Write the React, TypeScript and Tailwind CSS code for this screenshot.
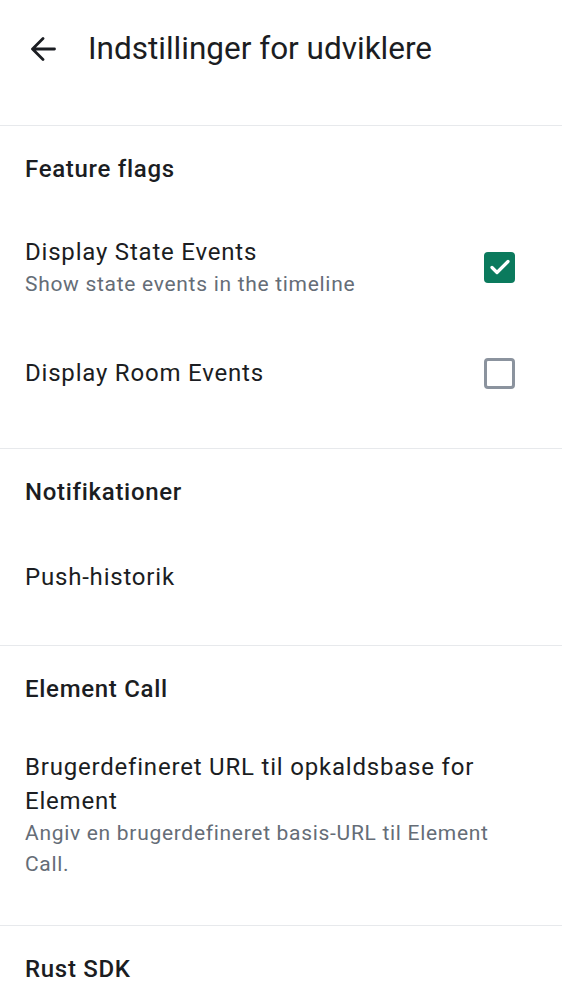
import React from 'react'

const font = { fontFamily: 'Roboto, "Noto Sans", sans-serif' }

function Checkbox({ checked }: { checked: boolean }) {
  if (checked) {
    return (
      <div className="flex h-[31px] w-[31px] items-center justify-center rounded-[4px] bg-[#0b7a5d]">
        <svg width="24" height="24" viewBox="0 0 24 24" fill="none">
          <path d="M4 12.5l5 5 11-11" stroke="white" strokeWidth="3.2" strokeLinecap="round" strokeLinejoin="round" />
        </svg>
      </div>
    )
  }
  return <div className="h-[31px] w-[31px] rounded-[4px] border-[3px] border-[#8b939e]" />
}

function SectionHeader({ title }: { title: string }) {
  return (
    <div className="flex h-[85px] items-center px-[25px] text-[24px] font-medium tracking-[0.7px] text-[#1b1d22]">
      {title}
    </div>
  )
}

function Divider() {
  return <div className="h-px bg-[#e7e9ec]" />
}

const itemTitle = 'text-[24px] leading-[34px] tracking-[0.8px] text-[#1b1d22]'
const itemSub = 'text-[21px] leading-[31px] tracking-[0.7px] text-[#656d77]'

export default function App() {
  return (
    <div className="min-h-[1000px] w-[562px] overflow-hidden bg-white" style={font}>
      <header className="flex h-[98px] items-center">
        <button className="ml-[31px] flex h-[24px] w-[25px] items-center" aria-label="Tilbage">
          <svg width="25" height="24" viewBox="0 0 25 24" fill="none">
            <path d="M23.5 12H2M12 1.5L1.5 12 12 22.5" stroke="#1b1d22" strokeWidth="2.8" strokeLinecap="round" strokeLinejoin="round" />
          </svg>
        </button>
        <h1 className="ml-[32px] text-[31.5px] leading-none text-[#1b1d22]">Indstillinger for udviklere</h1>
      </header>
      <div className="h-[27px]" />

      <Divider />
      <section className="pb-[25px]">
        <SectionHeader title="Feature flags" />
        <div className="flex h-[112px] items-center justify-between px-[25px]">
          <div>
            <div className={itemTitle}>Display State Events</div>
            <div className={itemSub}>Show state events in the timeline</div>
          </div>
          <div className="mr-[22px]">
            <Checkbox checked />
          </div>
        </div>
        <div className="flex h-[100px] items-center justify-between px-[25px]">
          <div className={itemTitle}>Display Room Events</div>
          <div className="mr-[22px]">
            <Checkbox checked={false} />
          </div>
        </div>
      </section>

      <Divider />
      <section className="pb-[25px]">
        <SectionHeader title="Notifikationer" />
        <div className={`flex h-[86px] items-center px-[25px] ${itemTitle}`}>Push-historik</div>
      </section>

      <Divider />
      <section className="pb-[25px]">
        <SectionHeader title="Element Call" />
        <div className="pb-[20px] pl-[25px] pr-[60px] pt-[19px]">
          <div className={itemTitle}>Brugerdefineret URL til opkaldsbase for Element</div>
          <div className={itemSub}>Angiv en brugerdefineret basis-URL til Element Call.</div>
        </div>
      </section>

      <Divider />
      <section>
        <SectionHeader title="Rust SDK" />
      </section>
    </div>
  )
}
